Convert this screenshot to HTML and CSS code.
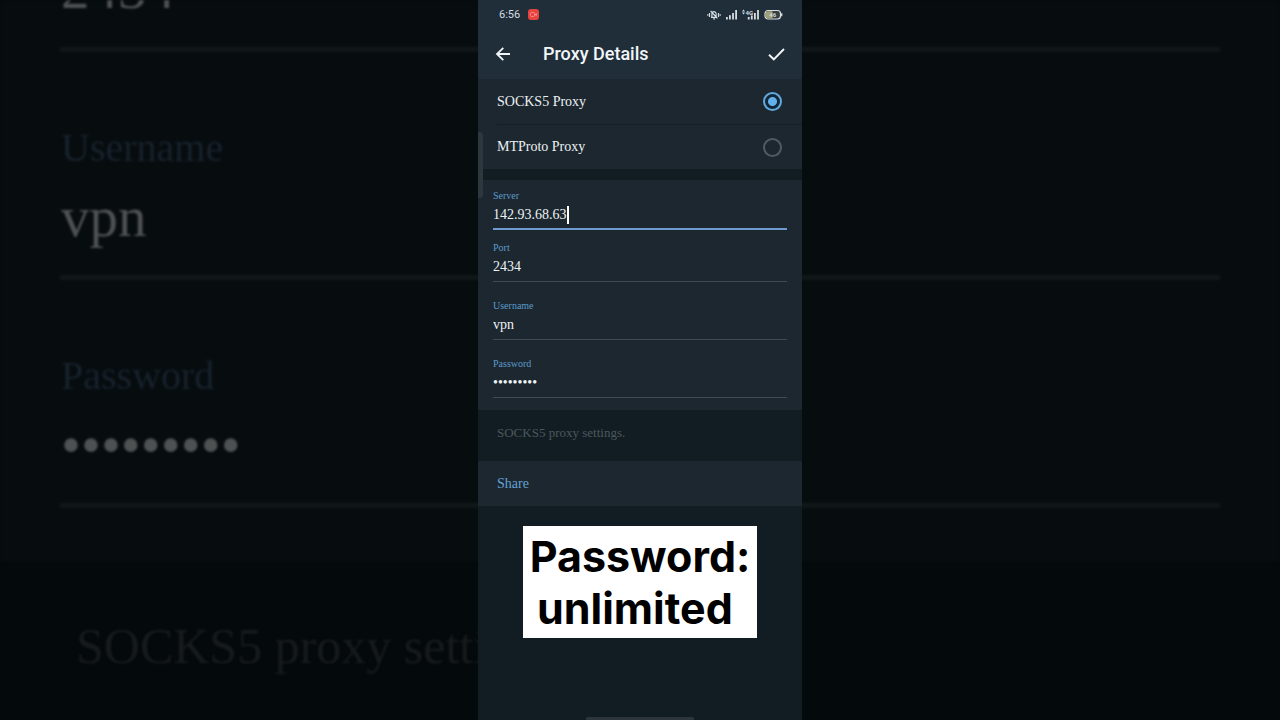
FILE: index.html
```
<!DOCTYPE html>
<html lang="en">
<head>
  <meta charset="UTF-8" />
  <meta name="viewport" content="width=device-width, initial-scale=1.0" />
  <title>Proxy Details</title>
  <link rel="stylesheet" href="styles.css">
</head>
<body>
  <!-- dimmed, enlarged copy of the form behind the phone -->
  <div class="backdrop" aria-hidden="true">
    <div class="backdrop-form">
      <div class="backdrop-value">2434</div>
      <div class="backdrop-label">Username</div>
      <div class="backdrop-value">vpn</div>
      <div class="backdrop-label">Password</div>
      <div class="backdrop-value">•••••••••</div>
    </div>
    <div class="backdrop-hint">SOCKS5 proxy settings.</div>
  </div>

  <main class="phone">
    <div class="edge-handle"></div>

    <header class="top">
      <div class="status">
        <span class="time">6:56</span>
        <svg class="rec" width="11" height="11" viewBox="0 0 11 11">
          <rect width="11" height="11" rx="3" fill="#e8443f"/>
          <rect x="2.5" y="3.5" width="4" height="4" rx="1" fill="none" stroke="#f79a94" stroke-width="0.8"/>
          <path d="M7 5.2l1.7-1.2v3L7 5.9z" fill="#f79a94"/>
        </svg>
        <span class="status-icons">
          <svg width="14" height="12" viewBox="0 0 14 12" fill="none" stroke="#d5dde2" stroke-width="1.2">
            <path d="M4 8.3h6M4.9 8.2V5a2.1 2.3 0 0 1 4.2 0v3.2M6.2 9.9h1.7M3.6 2l6.8 7.4"/>
            <path d="M2.5 4v4M11.5 4v4M.8 5.3v1.4M13.2 5.3v1.4"/>
          </svg>
          <svg width="13" height="12" viewBox="0 0 13 12" fill="#d5dde2">
            <rect x="1" y="8" width="1.8" height="2.5"/>
            <rect x="4" y="6.2" width="1.8" height="4.3"/>
            <rect x="7.1" y="4" width="1.8" height="6.5"/>
            <rect x="10.2" y="1" width="1.8" height="9.5"/>
          </svg>
          <svg width="18" height="12" viewBox="0 0 18 12" fill="#d5dde2">
            <path d="M1.5 .5l1.5 2H0zM1.5 5.5L0 3.5h3z"/>
            <text x="3.5" y="5.5" class="net">4G</text>
            <rect x="5.8" y="8" width="1.8" height="2.5"/>
            <rect x="8.9" y="6.5" width="1.8" height="4"/>
            <rect x="12" y="4" width="1.8" height="6.5"/>
            <rect x="15.1" y="1" width="1.8" height="9.5"/>
          </svg>
          <svg width="19" height="12" viewBox="0 0 19 12">
            <rect x="1" y="1.5" width="15.5" height="8.5" rx="3" fill="#33403f" stroke="#d5dde2" stroke-width="1.2"/>
            <path d="M4 2.2h4.5v7H4a2.3 2.3 0 0 1-2.3-2.3v-2.4a2.3 2.3 0 0 1 2.3-2.3z" fill="#a3a173"/>
            <path d="M17.7 4.2v3" stroke="#d5dde2" stroke-width="1.3"/>
            <text x="5.2" y="8" class="level">46</text>
          </svg>
        </span>
      </div>
      <div class="bar">
        <button class="icon-btn" aria-label="Back">
          <svg width="16" height="16" viewBox="0 0 16 16" fill="none" stroke="#f2f6f8" stroke-width="1.8">
            <path d="M15 8H2M8.3 1.8L2 8L8.3 14.2"/>
          </svg>
        </button>
        <h1>Proxy Details</h1>
        <button class="icon-btn" aria-label="Done">
          <svg width="18" height="16" viewBox="0 0 18 16" fill="none" stroke="#f2f6f8" stroke-width="1.9">
            <path d="M2 8.8L6.8 13.3L17 3"/>
          </svg>
        </button>
      </div>
    </header>

    <section class="types">
      <label class="type">SOCKS5 Proxy <input type="radio" name="type" checked></label>
      <label class="type">MTProto Proxy <input type="radio" name="type"></label>
    </section>

    <form class="fields">
      <div class="field active">
        <label for="server">Server</label>
        <div class="line"><input id="server" type="text" value="142.93.68.63"><span class="caret"></span></div>
      </div>
      <div class="field">
        <label for="port">Port</label>
        <div class="line"><input id="port" type="text" value="2434"></div>
      </div>
      <div class="field">
        <label for="username">Username</label>
        <div class="line"><input id="username" type="text" value="vpn"></div>
      </div>
      <div class="field">
        <label for="password">Password</label>
        <div class="line"><input id="password" type="password" value="unlimited"></div>
      </div>
    </form>

    <p class="hint">SOCKS5 proxy settings.</p>
    <button class="share">Share</button>

    <div class="caption">Password:<br>unlimited&nbsp;</div>
    <div class="home-bar"></div>
  </main>
</body>
</html>
```
FILE: styles.css
```
* {
  box-sizing: border-box;
}
body {
  margin: 0;
  min-height: 100vh;
  position: relative;
  overflow: hidden;
  background: #04090b;
  color: #edf2f4;
  font-family: "Liberation Serif", "Times New Roman", serif;
  font-size: 14px;
}
button, input {
  font: inherit;
  color: inherit;
  background: none;
  border: none;
  padding: 0;
  margin: 0;
}
button {
  cursor: pointer;
}

/* backdrop */
.backdrop {
  position: absolute;
  inset: 0;
  overflow: hidden;
  filter: blur(1px);
}
.backdrop-form {
  margin-top: -41px;
  padding: 0 60px 54px;
  background: #070c0f;
}
.backdrop-label {
  margin-top: 74px;
  margin-bottom: 17px;
  padding-left: 1px;
  font-size: 40px;
  line-height: 44px;
  color: #17222c;
}
.backdrop-value {
  padding: 0 1px 28px;
  border-bottom: 5px solid #111619;
  font-size: 57px;
  line-height: 60px;
  color: #4e5152;
}
.backdrop-hint {
  padding: 54px 76px;
  font-size: 50px;
  line-height: 60px;
  color: #171b1d;
}

/* phone */
.phone {
  position: relative;
  display: flex;
  flex-direction: column;
  width: 100%;
  max-width: 324px;
  min-height: 100vh;
  margin: 0 auto;
  background: #121d23;
}
.edge-handle {
  position: absolute;
  left: 0;
  top: 132px;
  width: 5px;
  height: 66px;
  border-radius: 0 4px 4px 0;
  background: #2c373e;
}
.top {
  background: #202e3a;
}
.status {
  display: flex;
  align-items: center;
  gap: 8px;
  height: 29px;
  padding: 0 19px 0 21px;
  font-family: Roboto, sans-serif;
}
.time {
  font-size: 11px;
  color: #d5dde2;
}
.status-icons {
  display: flex;
  gap: 4px;
  margin-left: auto;
}
.net {
  font: 700 6px Roboto, sans-serif;
}
.level {
  font: 700 6px Roboto, sans-serif;
  fill: #d5dde2;
}
.bar {
  display: flex;
  align-items: center;
  height: 50px;
  padding: 0 16px;
}
.bar h1 {
  flex: 1;
  margin: 0 0 0 31px;
  padding-bottom: 2px;
  font: 500 18px Roboto, sans-serif;
  color: #f2f6f8;
}
.icon-btn {
  display: flex;
  padding: 0 1px;
}
.types {
  background: #1c2730;
  margin-bottom: 11px;
}
.type {
  display: flex;
  align-items: center;
  justify-content: space-between;
  height: 45px;
  margin-left: 19px;
  padding-right: 20px;
}
.type + .type {
  border-top: 1px solid #141e25;
}
.type input {
  appearance: none;
  width: 19px;
  height: 19px;
  border: 2px solid #505b62;
  border-radius: 50%;
}
.type input:checked {
  border-color: #64a9dd;
  background: radial-gradient(circle, #64b0ea 4px, #12283a 5px);
}
.fields {
  display: flex;
  flex-direction: column;
  gap: 18px;
  padding: 10px 15px 12px;
  background: #1c2730;
}
.field label {
  display: block;
  font-size: 10px;
  line-height: 12px;
  color: #5c9bcb;
}
.line {
  display: flex;
  align-items: center;
  height: 28px;
  padding-bottom: 1px;
  border-bottom: 1px solid #3f4a52;
}
.line input {
  flex: 1;
  min-width: 0;
  height: 24px;
  outline: none;
}
.active {
  margin-bottom: -6px;
}
.active .line {
  padding-bottom: 0;
  border-bottom: 2px solid #6f9ad0;
}
.active input {
  flex: none;
  field-sizing: content;
}
.caret {
  width: 2px;
  height: 18px;
  background: #fff;
}
.hint {
  margin: 0;
  padding: 15px 19px 20px;
  font-size: 13px;
  line-height: 16px;
  color: #4c575d;
}
.share {
  height: 45px;
  padding: 0 19px;
  background: #1c2730;
  color: #64a3d6;
  text-align: left;
}
.caption {
  align-self: center;
  margin-top: 20px;
  padding: 4px 7px;
  background: #fff;
  color: #000;
  font: 700 43px/52px Inter, sans-serif;
  text-align: center;
}
.home-bar {
  align-self: center;
  width: 108px;
  height: 3px;
  margin-top: auto;
  border-radius: 2px 2px 0 0;
  background: #2b353b;
}
```
